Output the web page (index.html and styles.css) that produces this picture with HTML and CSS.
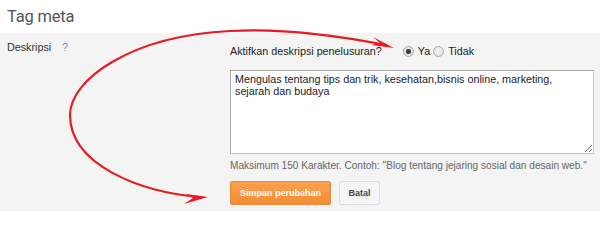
FILE: index.html
```html
<!DOCTYPE html>
<html lang="id">
<head>
<meta charset="utf-8">
<title>Tag meta</title>
<link rel="stylesheet" href="styles.css">
</head>
<body>
<div class="page">
  <header class="head">
    <h1 class="title">Tag meta</h1>
  </header>
  <section class="panel">
    <div class="label-col">
      <span class="label">Deskripsi</span>
      <span class="help">?</span>
    </div>
    <div class="content-col">
      <div class="question-row">
        <span class="question">Aktifkan deskripsi penelusuran?</span>
        <label class="radio-opt"><input type="radio" name="desc" class="radio" checked><span>Ya</span></label>
        <label class="radio-opt"><input type="radio" name="desc" class="radio"><span>Tidak</span></label>
      </div>
      <textarea class="desc-area">Mengulas tentang tips dan trik, kesehatan,bisnis online, marketing, sejarah dan budaya</textarea>
      <p class="hint">Maksimum 150 Karakter. Contoh: "Blog tentang jejaring sosial dan desain web."</p>
      <div class="actions">
        <button class="btn btn-primary">Simpan perubahan</button>
        <button class="btn btn-cancel">Batal</button>
      </div>
    </div>
  </section>
  <svg class="annot" width="600" height="218" viewBox="0 0 600 218" xmlns="http://www.w3.org/2000/svg">
    <path d="M 386 45 C 340 36, 280 28, 230 31 C 130 36, 70 80, 70 115 C 70 165, 140 192, 200 197" fill="none" stroke="#ea1a22" stroke-width="2.2" stroke-linecap="round"/>
    <polygon points="373,37 394,48 371,45 380,43" fill="#ea1a22"/>
    <polygon points="186,194 208,197 184,204 193,198" fill="#ea1a22"/>
  </svg>
</div>
</body>
</html>
```
FILE: styles.css
```css
html, body {
  margin: 0;
  padding: 0;
  background: #ffffff;
}

.page {
  position: relative;
  width: 600px;
  height: 218px;
  font-family: "Liberation Sans", Arial, sans-serif;
  font-size: 10.75px;
  color: #222;
}

.head {
  height: 33px;
  padding-left: 7px;
  display: flex;
  align-items: center;
}

.title {
  margin: 0;
  font-family: Roboto, "Open Sans", sans-serif;
  font-weight: 400;
  font-size: 16.5px;
  letter-spacing: -0.2px;
  color: #555;
  line-height: 20px;
}

.panel {
  height: 178px;
  box-sizing: border-box;
  background: #f4f4f4;
  padding-top: 8px;
  display: flex;
}

.label-col {
  flex: 0 0 230px;
  box-sizing: border-box;
  padding-left: 7px;
  line-height: 13px;
  display: flex;
  align-items: flex-start;
  gap: 11px;
}

.label {
  color: #333;
}

.help {
  color: #6a8ed0;
  font-size: 10px;
}

.content-col {
  flex: 0 0 auto;
  margin-top: 3px;
  display: flex;
  flex-direction: column;
  align-items: flex-start;
}

.question-row {
  height: 14px;
  line-height: 14px;
  display: flex;
  align-items: center;
}

.question {
  color: #222;
  margin-right: 21px;
}

.radio-opt {
  display: flex;
  align-items: center;
  margin-right: 3px;
  color: #222;
}

.radio {
  appearance: none;
  -webkit-appearance: none;
  margin: 0 4px 0 0;
  width: 11px;
  height: 11px;
  border-radius: 50%;
  border: 1px solid #a8a8a8;
  background: radial-gradient(circle at 50% 40%, #f4f4f4 0%, #dcdcdc 100%);
  box-sizing: border-box;
}

.radio:checked {
  background: radial-gradient(circle, #3e3e3e 0, #3e3e3e 2px, #6b6b6b 2.6px, #e6e6e6 3px, #d6d6d6 100%);
}

.desc-area {
  margin-top: 12px;
  width: 364px;
  height: 84px;
  box-sizing: border-box;
  border: 1px solid #a9a9a9;
  border-bottom-color: #c4c4c4;
  border-right-color: #c4c4c4;
  padding: 2px 4px;
  font-family: "Liberation Sans", Arial, sans-serif;
  font-size: 10.75px;
  line-height: 12px;
  color: #1a1a2a;
  background: #fff;
}

.hint {
  margin: 5px 0 0;
  font-size: 10.1px;
  line-height: 13px;
  color: #666;
  white-space: nowrap;
}

.actions {
  margin-top: 9px;
  display: flex;
  gap: 8px;
}

.btn {
  height: 24px;
  box-sizing: border-box;
  border-radius: 2px;
  font-family: "Liberation Sans", Arial, sans-serif;
  font-size: 9px;
  font-weight: bold;
  padding: 0;
  white-space: nowrap;
  cursor: pointer;
}

.btn-primary {
  width: 101px;
  background: linear-gradient(#fba150, #f48c34);
  border: 1px solid #ea8a38;
  color: #fff;
}

.btn-cancel {
  width: 41px;
  background: #f5f5f5;
  border: 1px solid #dcdcdc;
  color: #444;
}

.annot {
  position: absolute;
  top: 0;
  left: 0;
  pointer-events: none;
}
```
